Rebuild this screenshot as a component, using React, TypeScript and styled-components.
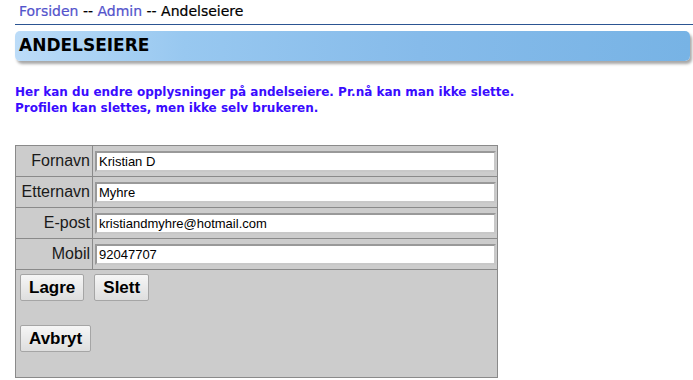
import React from "react";
import styled, { createGlobalStyle } from "styled-components";

const Global = createGlobalStyle`
  html, body { margin: 0; padding: 0; background: #ffffff; }
  body { font-family: "DejaVu Sans", Verdana, sans-serif; }
`;

const Page = styled.div`
  padding: 0 0 0 15px;
`;

const Breadcrumb = styled.div`
  height: 25px;
  box-sizing: border-box;
  padding: 3px 0 0 4px;
  font-size: 14px;
  line-height: 17px;
  color: #000;
  border-bottom: 1px solid #2c5592;
  -webkit-text-stroke: 0.2px currentColor;
`;

const Crumb = styled.a`
  color: #5353cc;
  text-decoration: none;
`;

const TitleBar = styled.h1`
  margin: 6px 3px 0 0;
  height: 30px;
  box-sizing: border-box;
  padding: 4px 0 0 4px;
  border-radius: 5px;
  background: linear-gradient(to right, #bcdcf8 0%, #98c8f0 25%, #86bbea 60%, #77b3e5 100%);
  box-shadow: 2px 3px 3px rgba(0, 0, 0, 0.35);
  font-size: 17px;
  line-height: 21px;
  font-weight: bold;
  color: #000;
`;

const Intro = styled.p`
  margin: 23px 0 0 0;
  font-size: 12px;
  line-height: 16px;
  font-weight: bold;
  color: #3a0bff;
`;

const FormTable = styled.table`
  margin-top: 29px;
  border-collapse: collapse;
  background: #cccccc;
  border: 1px solid #8a8a8a;
  width: 483px;
`;

const Row = styled.tr`
  border-bottom: 1px solid #8a8a8a;
`;

const Label = styled.td`
  width: 77px;
  padding: 0 2px 0 0;
  height: 31px;
  box-sizing: border-box;
  text-align: right;
  border-right: 1px solid #8a8a8a;
  font-family: "Liberation Sans", Arial, sans-serif;
  font-size: 16px;
  color: #1a1a1a;
  vertical-align: middle;
`;

const Field = styled.td`
  padding: 0 1px 0 2px;
  vertical-align: middle;
`;

const Input = styled.input`
  display: block;
  width: 401px;
  height: 21px;
  box-sizing: border-box;
  margin: 0;
  padding: 1px 2px;
  background: #fff;
  border: 2px solid;
  border-color: #999 #c8c8c8 #c8c8c8 #999;
  font-family: "Liberation Sans", Arial, sans-serif;
  font-size: 13px;
  color: #000;
  outline: none;
`;

const ActionCell = styled.td`
  padding: 4px 0 25px 4px;
  vertical-align: top;
`;

const ButtonLine = styled.div<{ $gap?: number }>`
  display: flex;
  gap: 10px;
  margin-top: ${(p) => p.$gap ?? 0}px;
`;

const Button = styled.button`
  height: 27px;
  box-sizing: border-box;
  padding: 0 8px;
  border: 1px solid #a5a5a5;
  border-radius: 2px;
  background: linear-gradient(#f6f6f6, #dedede);
  font-family: "Liberation Sans", Arial, sans-serif;
  font-size: 17px;
  font-weight: bold;
  color: #000;
  cursor: pointer;
`;

const fields = [
  { label: "Fornavn", value: "Kristian D" },
  { label: "Etternavn", value: "Myhre" },
  { label: "E-post", value: "kristiandmyhre@hotmail.com" },
  { label: "Mobil", value: "92047707" },
];

export default function App() {
  return (
    <>
      <Global />
      <Page>
        <Breadcrumb>
          <Crumb href="#">Forsiden</Crumb> -- <Crumb href="#">Admin</Crumb> -- Andelseiere
        </Breadcrumb>
        <TitleBar>ANDELSEIERE</TitleBar>
        <Intro>
          Her kan du endre opplysninger på andelseiere. Pr.nå kan man ikke slette.
          <br />
          Profilen kan slettes, men ikke selv brukeren.
        </Intro>
        <FormTable>
          <tbody>
            {fields.map((f) => (
              <Row key={f.label}>
                <Label>{f.label}</Label>
                <Field>
                  <Input defaultValue={f.value} />
                </Field>
              </Row>
            ))}
            <tr>
              <ActionCell colSpan={2}>
                <ButtonLine>
                  <Button>Lagre</Button>
                  <Button>Slett</Button>
                </ButtonLine>
                <ButtonLine $gap={24}>
                  <Button>Avbryt</Button>
                </ButtonLine>
              </ActionCell>
            </tr>
          </tbody>
        </FormTable>
      </Page>
    </>
  );
}
